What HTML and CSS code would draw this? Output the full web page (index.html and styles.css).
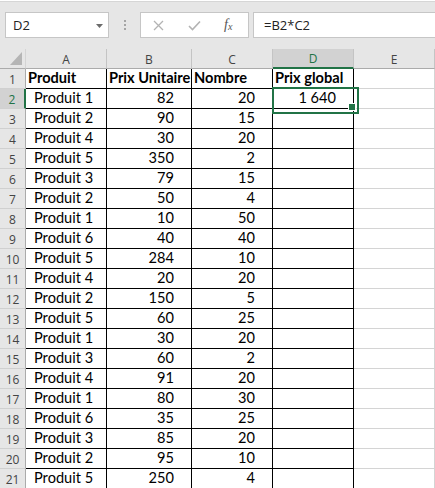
FILE: index.html
```html
<!DOCTYPE html>
<html lang="fr">
<head>
<meta charset="utf-8">
<title>Feuille</title>
<link rel="stylesheet" href="styles.css">
</head>
<body>
<div class="app">
  <div class="toolbar">
    <div class="namebox">
      <span class="name">D2</span>
      <svg class="dd" width="7" height="4" viewBox="0 0 7 4"><path d="M0 0h7L3.5 4z" fill="#6b6b6b"/></svg>
    </div>
    <div class="dots"><i></i><i></i><i></i></div>
    <div class="btns">
      <svg class="ic" width="11" height="11" viewBox="0 0 11 11"><path d="M1 1L10 10M10 1L1 10" stroke="#b3b3b3" stroke-width="1.3" fill="none"/></svg>
      <svg class="ic" width="13" height="11" viewBox="0 0 13 11"><path d="M1 6L4.5 9.5L12 1.5" stroke="#b3b3b3" stroke-width="1.6" fill="none"/></svg>
      <span class="fx">f<sub>x</sub></span>
    </div>
    <div class="formula">=B2*C2</div>
  </div>
  <div class="sheet">
    <div class="hd corner"><svg width="12" height="13" viewBox="0 0 12 13"><path d="M12 0V13H0z" fill="#b5b5b5"/></svg></div>
    <div class="hd col">A</div><div class="hd col">B</div><div class="hd col">C</div><div class="hd col sel">D</div><div class="hd col">E</div>

    <div class="hd row">1</div><div class="c b t">Produit</div><div class="c b t">Prix Unitaire</div><div class="c b t">Nombre</div><div class="c b t">Prix global</div><div class="c g"></div>
    <div class="hd row sel">2</div><div class="c b p">Produit 1</div><div class="c b n">82</div><div class="c b n">20</div><div class="c b n active">1 640</div><div class="c g"></div>
    <div class="hd row">3</div><div class="c b p">Produit 2</div><div class="c b n">90</div><div class="c b n">15</div><div class="c b"></div><div class="c g"></div>
    <div class="hd row">4</div><div class="c b p">Produit 4</div><div class="c b n">30</div><div class="c b n">20</div><div class="c b"></div><div class="c g"></div>
    <div class="hd row">5</div><div class="c b p">Produit 5</div><div class="c b n">350</div><div class="c b n">2</div><div class="c b"></div><div class="c g"></div>
    <div class="hd row">6</div><div class="c b p">Produit 3</div><div class="c b n">79</div><div class="c b n">15</div><div class="c b"></div><div class="c g"></div>
    <div class="hd row">7</div><div class="c b p">Produit 2</div><div class="c b n">50</div><div class="c b n">4</div><div class="c b"></div><div class="c g"></div>
    <div class="hd row">8</div><div class="c b p">Produit 1</div><div class="c b n">10</div><div class="c b n">50</div><div class="c b"></div><div class="c g"></div>
    <div class="hd row">9</div><div class="c b p">Produit 6</div><div class="c b n">40</div><div class="c b n">40</div><div class="c b"></div><div class="c g"></div>
    <div class="hd row">10</div><div class="c b p">Produit 5</div><div class="c b n">284</div><div class="c b n">10</div><div class="c b"></div><div class="c g"></div>
    <div class="hd row">11</div><div class="c b p">Produit 4</div><div class="c b n">20</div><div class="c b n">20</div><div class="c b"></div><div class="c g"></div>
    <div class="hd row">12</div><div class="c b p">Produit 2</div><div class="c b n">150</div><div class="c b n">5</div><div class="c b"></div><div class="c g"></div>
    <div class="hd row">13</div><div class="c b p">Produit 5</div><div class="c b n">60</div><div class="c b n">25</div><div class="c b"></div><div class="c g"></div>
    <div class="hd row">14</div><div class="c b p">Produit 1</div><div class="c b n">30</div><div class="c b n">20</div><div class="c b"></div><div class="c g"></div>
    <div class="hd row">15</div><div class="c b p">Produit 3</div><div class="c b n">60</div><div class="c b n">2</div><div class="c b"></div><div class="c g"></div>
    <div class="hd row">16</div><div class="c b p">Produit 4</div><div class="c b n">91</div><div class="c b n">20</div><div class="c b"></div><div class="c g"></div>
    <div class="hd row">17</div><div class="c b p">Produit 1</div><div class="c b n">80</div><div class="c b n">30</div><div class="c b"></div><div class="c g"></div>
    <div class="hd row">18</div><div class="c b p">Produit 6</div><div class="c b n">35</div><div class="c b n">25</div><div class="c b"></div><div class="c g"></div>
    <div class="hd row">19</div><div class="c b p">Produit 3</div><div class="c b n">85</div><div class="c b n">20</div><div class="c b"></div><div class="c g"></div>
    <div class="hd row">20</div><div class="c b p">Produit 2</div><div class="c b n">95</div><div class="c b n">10</div><div class="c b"></div><div class="c g"></div>
    <div class="hd row">21</div><div class="c b p">Produit 5</div><div class="c b n">250</div><div class="c b n">4</div><div class="c b"></div><div class="c g"></div>
  </div>
</div>
</body>
</html>
```

FILE: styles.css
```css
* { box-sizing: border-box; }
html, body { margin: 0; padding: 0; }
body { width: 435px; height: 488px; overflow: hidden; background: #ffffff; }
.app { width: 435px; height: 488px; overflow: hidden; }

.toolbar {
  height: 48px;
  background: #e6e6e6;
  border-top: 1px solid #d6d6d6;
  margin-top: 1px;
  display: flex;
  align-items: flex-start;
  padding: 10px 0 0 5px;
  font-family: "Open Sans", "Noto Sans", sans-serif;
}
.namebox {
  width: 104px;
  height: 26px;
  background: #fff;
  border: 1px solid #c6c6c6;
  display: flex;
  align-items: center;
  justify-content: space-between;
  padding: 0 5px 0 7px;
}
.name { font-size: 13px; color: #222; }
.dd { margin-top: 1px; }
.dots {
  width: 31px;
  height: 26px;
  display: flex;
  flex-direction: column;
  align-items: center;
  justify-content: center;
  gap: 2px;
}
.dots i { display: block; width: 2px; height: 2px; background: #a5a5a5; }
.btns {
  width: 109px;
  height: 26px;
  background: #fff;
  border: 1px solid #c6c6c6;
  display: flex;
  align-items: center;
  padding: 0 0 0 12px;
}
.btns .ic:nth-child(1) { margin-right: 24px; }
.btns .ic:nth-child(2) { margin-right: 23px; }
.fx {
  font-family: "Liberation Serif", serif;
  font-style: italic;
  font-size: 14px;
  color: #555;
  line-height: 1;
}
.fx sub { font-size: 10px; vertical-align: -1px; }
.formula {
  flex: 1;
  height: 26px;
  margin-left: 4px;
  background: #fff;
  border: 1px solid #c6c6c6;
  border-right: none;
  font-size: 13px;
  color: #222;
  padding: 3px 0 0 10px;
}

.sheet {
  display: grid;
  grid-template-columns: 26px 81px 85px 81px 81px 81px;
  grid-auto-rows: 20px;
  font-family: "Lato", "Liberation Sans", sans-serif;
  font-size: 14.6px;
  color: #000;
}
.hd {
  background: #e6e6e6;
  color: #444;
  font-family: "Open Sans", "Noto Sans", sans-serif;
  font-size: 12px;
  display: flex;
  align-items: center;
  justify-content: center;
  border-right: 1px solid #c4c4c4;
  border-bottom: 1px solid #ababab;
}
.corner { justify-content: flex-end; align-items: flex-end; padding: 0 3px 3px 0; border-right-color: #d4d4d4; }
.col { padding-top: 1px; }
.row { border-bottom-color: #d0d0d0; border-right-color: #ababab; padding-top: 1px; }
.col.sel { background: #d2d2d2; color: #217346; border-bottom: 2px solid #217346; }
.row.sel { background: #d2d2d2; color: #217346; border-right: 2px solid #217346; }

.c {
  border-right: 1px solid #000;
  border-bottom: 1px solid #000;
  display: flex;
  align-items: flex-end;
  padding: 0 3px 1px 3px;
  line-height: 18px;
  white-space: nowrap;
  overflow: visible;
}
.c.g { border-right-color: #d4d4d4; border-bottom-color: #d4d4d4; }
.t { font-weight: 700; padding-left: 2px; }
.p { padding-left: 8px; }
.n { justify-content: flex-end; padding-right: 17px; }
.active { position: relative; }
.active::after {
  content: "";
  position: absolute;
  left: -1px;
  top: -2px;
  width: 83px;
  height: 23px;
  border: 2px solid #217346;
}
.active::before {
  content: "";
  position: absolute;
  right: -3px;
  bottom: -3px;
  width: 6px;
  height: 6px;
  background: #217346;
  border: 1px solid #fff;
  z-index: 2;
}
```
